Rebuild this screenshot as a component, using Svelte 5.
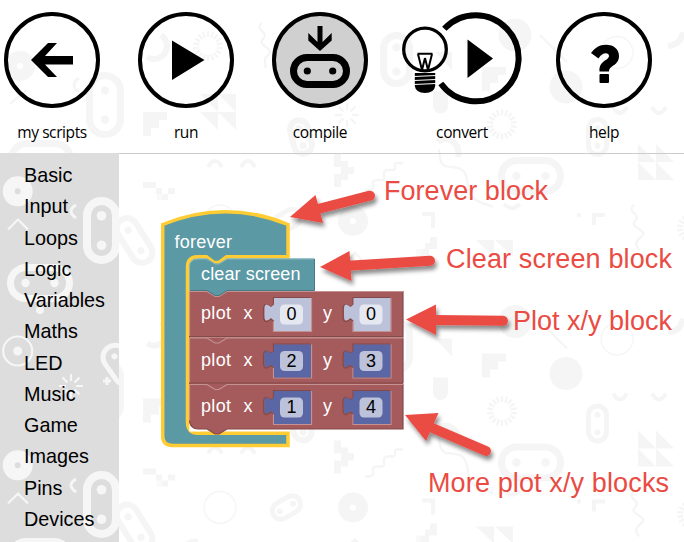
<script>
  const categories = ['Basic', 'Input', 'Loops', 'Logic', 'Variables', 'Maths', 'LED', 'Music', 'Game', 'Images', 'Pins', 'Devices'];

  const plots = [
    { top: 291, x: 0, y: 0, dim: true },
    { top: 337.5, x: 2, y: 3 },
    { top: 384, x: 1, y: 4 }
  ];

  const notes = [
    { text: 'Forever block', x: 384, y: 200, width: 164, head: '290,217 315.5,195 323,223', from: [318, 209], to: [370, 195.7] },
    { text: 'Clear screen block', x: 446, y: 268, width: 226, head: '320,267 349.5,251 351.5,281', from: [348, 265.8], to: [430, 260.7] },
    { text: 'Plot x/y block', x: 513, y: 330, width: 159, head: '406,319.5 436,304.5 436,335', from: [434, 320], to: [503, 320.8] },
    { text: 'More plot x/y blocks', x: 428, y: 492, width: 241, head: '405,415 438.5,413 426,441', from: [430, 427], to: [486, 451] }
  ];

  const rays = (cx, cy, inner, outer, count) =>
    Array.from({ length: count }, (_, i) => {
      const a = (i / count) * Math.PI * 2 - Math.PI / 2;
      const c = Math.cos(a), s = Math.sin(a);
      return `M${cx + inner * c} ${cy + inner * s}L${cx + outer * c} ${cy + outer * s}`;
    }).join('');
</script>

{#snippet disc(cx, cy, r)}
  <circle {cx} {cy} r={(r + 3) / 2} fill="none" stroke="currentColor" stroke-width={r - 3} />
{/snippet}

{#snippet bit(x, y, w, h, s, turn)}
  <g transform={`rotate(${turn} ${x + w / 2} ${y + h / 2})`}>
    <rect x={x + s / 2} y={y + s / 2} width={w - s} height={h - s} rx={(Math.min(w, h) - s) / 2} fill="none" stroke="currentColor" stroke-width={s} />
    {#if w > h}
      <circle cx={x + w * 0.28} cy={y + h / 2} r={s * 0.6} />
      <circle cx={x + w * 0.72} cy={y + h / 2} r={s * 0.6} />
    {:else}
      <circle cx={x + w / 2} cy={y + h * 0.28} r={s * 0.6} />
      <circle cx={x + w / 2} cy={y + h * 0.72} r={s * 0.6} />
    {/if}
  </g>
{/snippet}

{#snippet number(x, top, value, dim)}
  <g class="value" class:dim>
    <path class="shine" d={`M${x + 37.5} ${top + 7}V${top + 40.5}H${x - 0.5}V${top + 30}`} />
    <path class="shade" d={`M${x - 0.5} ${top + 30}l-3 -2q-6.5 6 -7 -2v-8q.5 -8 7 -2l3 -2v-7.5h37`} />
    <path class="plug" d={`M${x} ${top + 7}h37v33h-37v-10.5l-3 -2.5q-6.5 6 -6.5 -2v-7q0 -8 6.500 -2l3 -2.500z`} />
    <rect class="field" x={x + 6} y={top + 13.5} width="23" height="20" rx="4.500" />
    <text x={x + 17.5} y={top + 29} text-anchor="middle">{value}</text>
  </g>
{/snippet}

<div class="editor">
  <svg class="pattern" width="684" height="542" viewBox="0 0 684 542" fill="currentColor" aria-hidden="true">
    <defs>
      <g id="doodles">
        {@render disc(20, 66, 15)}
        {@render bit(86, 72, 38, 66, 7, 0)}
        {@render bit(8, 140, 66, 38, 7, 0)}
        {@render bit(380, 32, 33, 55, 7, 0)}
        {@render bit(289, 117, 24, 40, 6, -14)}
        {@render bit(586, 117, 23, 40, 5, 0)}
        {@render bit(498, 157, 66, 38, 7, 0)}
        {@render bit(121, 213, 27, 55, 6, -32)}
        {@render bit(269, 210, 35, 22, 5, -30)}
        {@render disc(353, 221, 15)}
        <circle cx="515" cy="35" r="16.500" /><circle cx="566" cy="87" r="16.500" />
        <g fill="none" stroke="currentColor" stroke-width="1.300">
          <circle cx="617" cy="52.500" r="16" /><circle cx="220" cy="221" r="16" />
        </g>
        <g fill="none" stroke="currentColor" stroke-width="2.300">
          <path d="M10 104L27 90M540 35L567 62M262 23q-5 4 0 8t1 8t3 8t2 8t-2 13" />
          <path d="M439 149c1 10 1 15 6 17s18-1 21 10c3 9 1 18 10 24s10 3 17 7" />
          <path d="M365 190h5q4 0 3-5t4-5h5q3 0 2-5t4-5h4q4 0 3-4t4-3h4M634 205q-5 4 0 8t1 8t4 8t1 9t-1 12M346 262l9-9 9 9" />
          <path d={rays(208, 46, 9, 15, 18) + rays(502, 124.500, 9, 15, 18) + rays(692, 228, 9, 15, 18) + rays(347, 115, 5, 12, 8)} />
        </g>
        <g fill="none" stroke="currentColor" stroke-width="6">
          <path d="M161 35a12 12 0 0 1-14 22M438 142c8-7 23 0 20 15M683 32q-2 13-15 14M198 255q-11-1-16 10" />
          <path d="M613 107q7 12 14 0M652 107q7 12 14 0M208 167q7-12 14 0M241 167q7-12 14 0" stroke-width="4" />
          <path d="M422 214h11v14M594 225v-10h11M504 204q8 8 16 0" stroke-width="4" />
        </g>
        <path d="M143 112h24v8h-8v8h-8v8h-8zM482 67h24v8h-8v8h-8v8h-8zM433 91h15v15a7.500 7.500 0 0 1-15 0z" />
        <path d="M200 94h18v18zM218 94h18v18zM200 112h18v18zM218 112h18v18zM435 52h17v18zM476 240h18v17zM495 240h18v17z" />
        <path d="M638 144l18 18h-18zM656 144l18 18h-18zM638 162l18 18h-18zM656 162l18 18h-18zM577 213h4v4h-4z" />
        <path d="M143 182h13v6h6v6h6v-6h7v6h-7v6h-6v-6h-6v-6h-13zM334 154h7v7h7v6h6v7h-6v6h-7v7h-7v-13h7v-7h-7zM430 237h7v12h-8v7h-8v-7h4v-6h5z" />
        <path d="M348 167h6v6h-6zM157 194h5v6h-5zM416 249h7v7h-7z" opacity=".6" />
        <path d="M79 92q-10-7 0-14" fill="none" stroke="currentColor" stroke-width="3" />
      </g>
    </defs>
    <use href="#doodles" /><use href="#doodles" y="286.500" />
  </svg>

  <header>
    <button>
      <svg width="96" height="96" viewBox="4 12 96 96"><circle class="ring" cx="52" cy="60" r="46" /><path d="M31 60L48 43h9L45 56h28v8.500H45L57 77h-9z" /></svg>
      <span>my scripts</span>
    </button>
    <button>
      <svg width="96" height="96" viewBox="138 12 96 96"><circle class="ring" cx="186" cy="60" r="46" /><path d="M172 40.500L204.500 60 172 80z" /></svg>
      <span>run</span>
    </button>
    <button>
      <svg width="96" height="96" viewBox="272 12 96 96">
        <circle class="ring on" cx="320" cy="60" r="46" />
        <path d="M317.500 26h5v16l9.200-9v7.500L320 51l-11.700-10.500V33l9.200 9z" />
        <rect x="293.500" y="57.500" width="53" height="27" rx="13.500" fill="none" stroke="#000" stroke-width="7" />
        <circle cx="307.300" cy="71" r="3.600" /><circle cx="332.700" cy="71" r="3.600" />
      </svg>
      <span>compile</span>
    </button>
    <button class="wide">
      <svg width="120" height="96" viewBox="402 12 120 96">
        <path d="M444.300 28.800A43 43 0 1 1 440.800 83.600" fill="none" stroke="#000" stroke-width="6" />
        <path d="M467.500 39.500L493 58.500 467.500 78z" />
        <circle cx="425" cy="49.500" r="21.300" fill="none" stroke="#000" stroke-width="3.300" />
        <path d="M417.500 53.800h15M418 54l4 16M432 54l-4 16M425 58l-3 12M425 58l3 12" fill="none" stroke="#000" stroke-width="2" />
        <path d="M414.800 73h20.400v13q-1 7-10.200 7t-10.200-7z" />
        <path d="M414 76.500l22-1M414 80.500l22-1M414 84.500l22-1" stroke="#fff" stroke-width="1.200" />
      </svg>
      <span>convert</span>
    </button>
    <button>
      <svg width="96" height="96" viewBox="556 12 96 96">
        <circle class="ring" cx="604" cy="60" r="46" />
        <path d="M591 53C595 48 599 44.800 606 44.800C614 44.800 619 49.500 619 56C619 62 615.500 64 612 66.500C609.500 68.300 609 69.500 609 71.500H599.500C599 66 601 63.500 605 60.500C608 58.500 609 57.500 609 56C609 52.500 602.500 51.500 598.500 58.500Z" />
        <rect x="599.500" y="74" width="9.500" height="9" rx="1" />
      </svg>
      <span>help</span>
    </button>
  </header>

  <main>
    <nav>
      <svg width="119" height="389" viewBox="0 153 119 389" fill="currentColor" aria-hidden="true">
        <defs>
          <g id="panel-doodles">
            {@render disc(17.700, 191.300, 15)}
            {@render bit(83, 197, 37, 67, 8, 0)}
            {@render bit(7, 264, 66, 38, 7, 0)}
            {@render bit(106, 341, 29, 48, 5, -35)}
            <circle cx="40" cy="310" r="4" /><circle cx="17.700" cy="351" r="4.500" />
            <g fill="none" stroke="currentColor" stroke-width="2.200">
              <circle cx="17.700" cy="351" r="14.500" />
              <path d={'M8 229.500L18 219.500 28 229.500' + rays(71, 386, 5, 12, 8)} />
              <path d="M76 205q-10 6 0 13M103 381h8M107 377v8" stroke-width="3" />
            </g>
          </g>
        </defs>
        <use href="#panel-doodles" /><use href="#panel-doodles" y="274" />
      </svg>
      <ul>
        {#each categories as name}<li>{name}</li>{/each}
      </ul>
    </nav>

    <section>
      <svg width="565" height="389" viewBox="119 153 565 389">
        <defs>
          <filter id="drop" x="-20%" y="-30%" width="150%" height="180%">
            <feDropShadow dx="2" dy="4" stdDeviation="2" flood-color="#000" flood-opacity=".45" />
          </filter>
        </defs>

        <path class="loop" d="M162.700 224.500Q225.500 199 288 224.500V256.800H226.500L219 262.500H214L206.500 256.800H197Q187.500 257.500 187.500 267V423Q188 433.300 198 433.300H288V445.500H172Q162.700 445 162.700 436Z" />
        <path d="M189.300 420V431.500H200" fill="#fff" />
        <text x="174.500" y="248" textLength="57.500">forever</text>

        {#each plots as p, i}
          {@const last = i === plots.length - 1}
          {@const t = p.top}
          <g class="plot">
            {#if last}
              <path class="body" d={`M189 ${t}H403V${t + 45}H227l-8 5h-4l-8-5H198q-9 0-9-9z`} />
              <path class="edge" d={`M403 ${t}V${t + 45}H227l-8 5h-4l-8-5H198q-7 0-8.500-8`} />
            {:else}
              <path class="body" d={`M189 ${t}H403v46.500H189z`} />
              <path class="edge" d={`M403 ${t}v45.500H189`} />
            {/if}
            <path class="light" d={`M189.500 ${t + (last ? 36 : 45)}V${t + 0.5}h17.500l8 5h4l8-5H403`} />
            <text x="201" y={t + 28} textLength="30">plot</text>
            <text x="243.500" y={t + 28}>x</text>
            <text x="323" y={t + 28}>y</text>
            {@render number(274, t, p.x, p.dim)}
            {@render number(353.500, t, p.y, p.dim)}
          </g>
        {/each}

        <path class="clear" d="M189 290.500V267q0-8.500 9-8.500h9l8 5h4l8-5h87.500v32H227l-8 5h-4l-8-5z" />
        <path class="clear-light" d="M189.500 290V267q0-8 9-8h8.500l8 5h4l8-5H314" />
        <path class="clear-edge" d="M314.500 259v31.500H227l-8 5h-4l-8-5H190" />
        <text x="201" y="280" textLength="99.500">clear screen</text>

        {#each notes as n}
          <g class="note">
            <g filter="url(#drop)">
              <polygon points={n.head} />
              <path d={`M${n.from}L${n.to}`} />
            </g>
            <text x={n.x} y={n.y} textLength={n.width}>{n.text}</text>
          </g>
        {/each}
      </svg>
    </section>
  </main>
</div>

<style>
  :global(body) { margin: 0; background: #fff; }
  .editor { position: relative; width: 684px; height: 542px; overflow: hidden; display: flex; flex-direction: column; background: #fff; }
  .pattern { position: absolute; inset: 0; color: #f5f5f5; }
  header { position: relative; box-sizing: border-box; height: 153px; padding: 12px 0 0 2px; display: flex; gap: 34px; align-items: flex-start; }
  button { width: 100px; padding: 0; border: 0; background: none; display: flex; flex-direction: column; align-items: center; color: #000; }
  button.wide { width: 116px; }
  button svg { flex: none; display: block; }
  button span { margin-top: 13px; font: 15.5px/22px "Open Sans", "Noto Sans", sans-serif; white-space: nowrap; letter-spacing: -0.4px; }
  .ring { fill: none; stroke: #000; stroke-width: 4; }
  .ring.on { fill: #d0d0d0; }
  main { position: relative; flex: 1; display: flex; min-height: 0; }
  nav { position: relative; width: 119px; background: #ddd; }
  nav svg { position: absolute; inset: 0; color: #f6f6f6; }
  ul { position: relative; margin: 0; padding: 7px 0 0 24px; list-style: none; font: 19.8px/31.27px "Liberation Sans", Arial, sans-serif; color: #000; }
  section { flex: 1; box-sizing: border-box; box-shadow: inset 0 1px #ccc; }
  section svg { display: block; font: 18px "Liberation Sans", Arial, sans-serif; }
  section text { fill: #fff; }
  .loop { fill: #5b99a5; stroke: #fc3; stroke-width: 3.5; }
  .plot .body { fill: #a55b5b; }
  .light { fill: none; stroke: #c59191; stroke-width: 1.2; }
  .edge { fill: none; stroke: #844949; stroke-width: 1.2; }
  .clear { fill: #5b99a5; }
  .clear-light { fill: none; stroke: #8cb8c0; stroke-width: 1; }
  .clear-edge { fill: none; stroke: #497a84; stroke-width: 1; }
  .plug { fill: #5b67a5; }
  .field { fill: #bdc2db; }
  .dim .plug { fill: #bdc2db; }
  .dim .field { fill: #e5e7f1; }
  .value text { fill: #000; }
  .shine { fill: none; stroke: #c59191; stroke-width: 1.2; }
  .shade { fill: none; stroke: #844949; stroke-width: 1.2; }
  .note polygon { fill: #ea4b43; }
  .note path { fill: none; stroke: #ea4b43; stroke-width: 10; stroke-linecap: round; }
  .note text { fill: #ea4b43; font-size: 27px; }
</style>
